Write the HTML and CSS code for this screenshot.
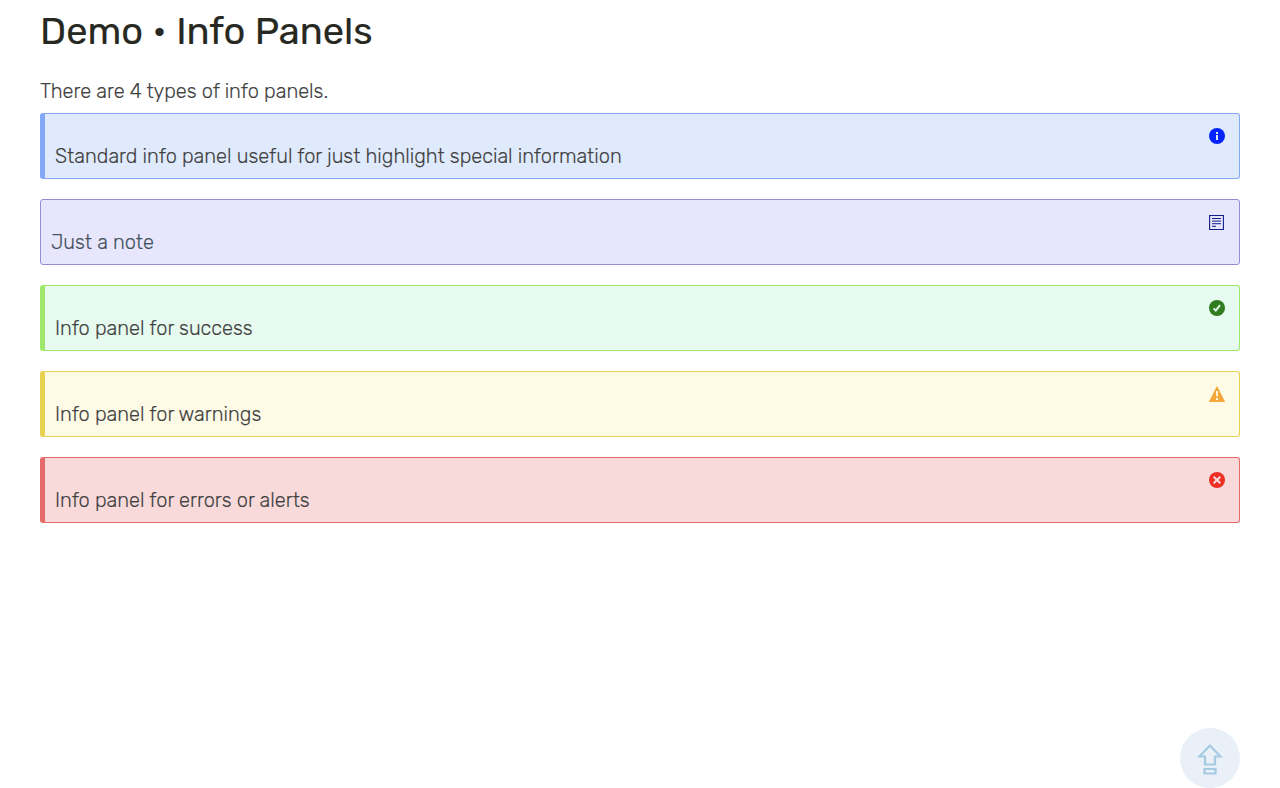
FILE: index.html
```html
<!DOCTYPE html>
<html lang="en">
<head>
<meta charset="utf-8">
<title>Demo • Info Panels</title>
<link rel="stylesheet" href="styles.css">
</head>
<body>
<main class="page">
  <h1 class="title">Demo • Info Panels</h1>
  <p class="intro">There are 4 types of info panels.</p>
  <section class="panels">
    <div class="panel info">
      <p class="text">Standard info panel useful for just highlight special information</p>
      <svg class="icon" viewBox="0 0 16 16"><circle cx="8" cy="8" r="8" fill="#0423ff"/><path d="M7 4h2v2H7zM7 7h2v5H7z" fill="#e0eafd"/></svg>
    </div>
    <div class="panel note">
      <p class="text">Just a note</p>
      <svg class="icon" viewBox="0 0 16 16"><path d="M.6 1.5h13.8v14H.6z" fill="none" stroke="#12208a" stroke-width="1.1"/><path d="M3 4.5h9M3 7.1h9M3 9.7h9M3 12.3h4" stroke="#12208a" stroke-width="1"/></svg>
    </div>
    <div class="panel success">
      <p class="text">Info panel for success</p>
      <svg class="icon" viewBox="0 0 16 16"><circle cx="8" cy="8" r="8" fill="#327c20"/><path d="M4.6 8.4l2.2 2.2L11 5.2" fill="none" stroke="#e5faef" stroke-width="2"/></svg>
    </div>
    <div class="panel warning">
      <p class="text">Info panel for warnings</p>
      <svg class="icon" viewBox="0 0 16 16"><path d="M8 .7L15.8 16H.2z" fill="#f4a63a" stroke="#f4a63a" stroke-width=".8" stroke-linejoin="round"/><path d="M7 5h2l-.2 5.5H7.2zM7 12h2v2H7z" fill="#fffbe8"/></svg>
    </div>
    <div class="panel error">
      <p class="text">Info panel for errors or alerts</p>
      <svg class="icon" viewBox="0 0 16 16"><circle cx="8" cy="8" r="8" fill="#ed2f24"/><path d="M4.7 4.7l6.6 6.6M11.3 4.7l-6.6 6.6" stroke="#f8dadb" stroke-width="2.1"/></svg>
    </div>
  </section>
</main>
<a class="to-top" href="#" aria-label="Back to top">
  <svg width="60" height="60" viewBox="0 0 60 60" fill="none" stroke="#a5cbe2" stroke-width="2.2"><path d="M30 17.5L19.5 28.5H25V36.5H35V28.5H40.5z"/><path d="M24.5 41h11v4.5h-11z"/></svg>
</a>
</body>
</html>
```
FILE: styles.css
```css
body {
  margin: 0;
  background: #fff;
  color: #404040;
  font: 300 20px/30px Rubik, Roboto, sans-serif;
  -webkit-text-stroke: 0.15px;
}
.page { padding: 0 40px; }
.title {
  margin: 0;
  padding-top: 6px;
  color: #272822;
  font-size: 38px;
  font-weight: 400;
  line-height: 50px;
  -webkit-text-stroke: 0.15px;
}
.intro { margin: 20px 0 7px; }
.panels { display: flex; flex-direction: column; gap: 20px; }
.panel {
  box-sizing: border-box;
  height: 66px;
  display: flex;
  justify-content: space-between;
  align-items: flex-start;
  padding: 14px 14px 0 10px;
  border: 1px solid;
  border-left-width: 5px;
  border-radius: 3px;
}
.text { margin: 13px 0 0; }
.icon { width: 16px; height: 16px; flex: none; }
.info { background: #e0eafd; border-color: #84a9f9; }
.note { background: #e8e6fd; border-color: #958dd3; border-left-width: 1px; }
.note .text { color: #40505a; }
.success { background: #e6faef; border-color: #9de76b; }
.warning { background: #fdfae6; border-color: #e8d251; }
.error { background: #f8dadb; border-color: #e66b6b; }
.to-top {
  position: fixed;
  right: 40px;
  bottom: 0;
  width: 60px;
  height: 60px;
  border-radius: 50%;
  background: #eaf0f7;
}
.to-top svg { display: block; }
```
